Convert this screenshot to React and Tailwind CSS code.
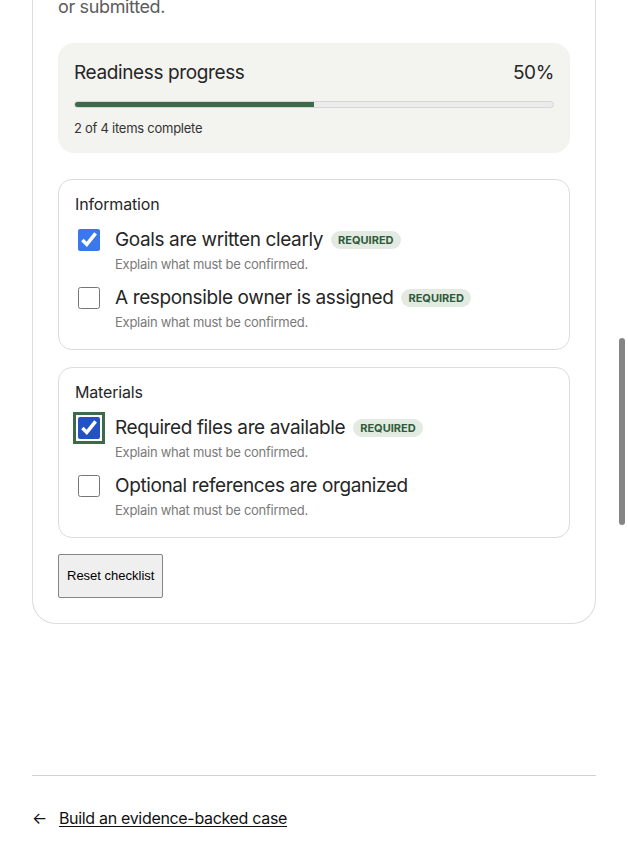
import { useState } from "react";

const groups = [
  {
    title: "Information",
    items: [
      { id: "goals", label: "Goals are written clearly", required: true },
      { id: "owner", label: "A responsible owner is assigned", required: true },
    ],
  },
  {
    title: "Materials",
    items: [
      { id: "files", label: "Required files are available", required: true },
      { id: "refs", label: "Optional references are organized", required: false },
    ],
  },
];

const initial = { goals: true, owner: false, files: true, refs: false };

export default function App() {
  const [checked, setChecked] = useState(initial);
  const total = Object.keys(checked).length;
  const done = Object.values(checked).filter(Boolean).length;
  const pct = Math.round((done / total) * 100);

  return (
    <div className="min-h-screen bg-white font-['Inter',sans-serif] text-[#262626]">
      <div className="px-8">
        <section className="rounded-b-[24px] border border-t-0 border-[#dcdcdc] px-[25px] pb-[25px]">
          <p className="-mt-[7px] text-[18px] leading-[28px] tracking-[-0.02em] text-[#5c5c5c]">
            or submitted.
          </p>

          <div className="mt-[22px] rounded-[16px] bg-[#f3f4f0] px-4 pt-4 pb-[15px]">
            <div className="flex items-center justify-between text-[19px] leading-[28px] tracking-[-0.02em]">
              <span>Readiness progress</span>
              <span>{pct}%</span>
            </div>
            <div className="mt-[14px] h-[7px] overflow-hidden rounded-full border border-[#d6d6d6] bg-[#ececec]">
              <div className="h-full bg-[#3d6b4a]" style={{ width: pct + "%" }}></div>
            </div>
            <div className="mt-[10px] text-[13px] leading-[20px] tracking-[-0.02em] text-[#333]">
              {done} of {total} items complete
            </div>
          </div>

          {groups.map((group, gi) => (
            <fieldset
              key={group.title}
              className={
                "rounded-[14px] border border-[#dcdcdc] px-4 pt-3 pb-[17px] " +
                (gi === 0 ? "mt-[26px]" : "mt-[17px]")
              }
            >
              <div className="text-[16px] leading-[24px] tracking-[-0.01em]">
                {group.title}
              </div>
              <div className="mt-[10px] flex flex-col gap-[10px]">
                {group.items.map((item) => (
                  <label key={item.id} className="flex items-start gap-[15px]">
                    <input
                      type="checkbox"
                      checked={checked[item.id]}
                      onChange={() =>
                        setChecked({ ...checked, [item.id]: !checked[item.id] })
                      }
                      className={
                        "ml-[3px] mt-[3px] h-[22px] w-[22px] shrink-0 " +
                        (item.id === "files"
                          ? "accent-[#2352c4] outline-[3px] outline-solid outline-offset-[2px] outline-[#3d6b4a]"
                          : "accent-[#3b78ee]")
                      }
                    />
                    <div>
                      <div className="flex items-center gap-2">
                        <span className="text-[19px] leading-[28px] tracking-[-0.02em]">
                          {item.label}
                        </span>
                        {item.required && (
                          <span className="rounded-full bg-[#e2eae2] px-[7px] text-[11px] font-bold leading-[18px] text-[#2f5b3b]">
                            REQUIRED
                          </span>
                        )}
                      </div>
                      <div className="text-[13px] leading-[20px] tracking-[-0.02em] text-[#7a7a7a]">
                        Explain what must be confirmed.
                      </div>
                    </div>
                  </label>
                ))}
              </div>
            </fieldset>
          ))}

          <button
            onClick={() => setChecked(initial)}
            className="mt-[16px] rounded-[2px] border border-[#858585] bg-[#efefef] px-[8px] py-[12px] font-['Liberation_Sans',Arial,sans-serif] text-[13px] leading-[18px] text-black"
          >
            Reset checklist
          </button>
        </section>

        <hr className="mt-[151px] border-[#d0d0d0]" />

        <div className="mt-[30px] flex items-center gap-3 text-[16px] leading-[24px] tracking-[-0.02em] text-[#111]">
          <span>←</span>
          <a href="#" className="underline underline-offset-2">
            Build an evidence-backed case
          </a>
        </div>
      </div>

      <div className="fixed right-[3px] top-[338px] h-[187px] w-[6px] rounded-full bg-[#858585]"></div>
    </div>
  );
}
